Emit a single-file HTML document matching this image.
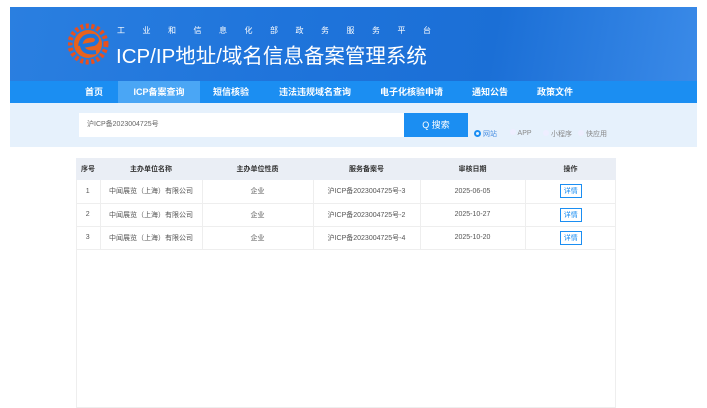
<!DOCTYPE html>
<html><head><meta charset="utf-8"><style>
*{margin:0;padding:0;box-sizing:border-box}
body{width:707px;height:400px;background:#fff;font-family:"Liberation Sans","Noto Sans CJK SC",sans-serif;position:relative;overflow:hidden}
.hdr{position:absolute;left:10px;top:7px;width:687px;height:74px;background:linear-gradient(100deg,#2a7fe0 0%,#1f74db 40%,#1b6fd6 70%,#3a8ae8 100%)}
.sub{position:absolute;left:117px;top:25px;color:#fff;font-size:8px;letter-spacing:17.5px;white-space:nowrap}
.title{position:absolute;left:116px;top:39px;color:#fff;font-size:20.5px;white-space:nowrap}
.nav{position:absolute;left:10px;top:81px;width:687px;height:22px;background:#1b8ef2}
.nav span{position:absolute;top:0;height:22px;line-height:22px;color:#fff;font-size:9px;font-weight:bold;white-space:nowrap}
.srch{position:absolute;left:10px;top:103px;width:687px;height:44px;background:#e6f1fc}
.inp{position:absolute;left:79px;top:113px;width:326px;height:24px;background:#fff;font-size:7px;color:#666;line-height:24px;padding-left:8px}
.btn{position:absolute;left:404px;top:113px;width:64px;height:24px;background:#1b8ef2;color:#fff;font-size:9px;line-height:24px;text-align:center}
.rad{position:absolute;top:129px;font-size:7px;color:#888;white-space:nowrap}
table{position:absolute;left:76px;top:158px;width:540px;border-collapse:collapse;font-size:7px;color:#555}
th{background:#eaeef5;height:22px;font-weight:bold;color:#333}
td{height:23px;border-right:1px solid #eee;border-bottom:1px solid #eee;text-align:center}
td:last-child{border-right:none}
.det{display:inline-block;border:1px solid #1b8ef2;color:#1b8ef2;padding:1px 3px;font-size:7px}
.frame{position:absolute;left:76px;top:158px;width:540px;height:250px;border:1px solid #eee}
</style></head><body>
<div class="hdr">
<svg style="position:absolute;left:58px;top:15px" width="44" height="44" viewBox="0 0 44 44">
<circle cx="20" cy="22" r="18" fill="none" stroke="#e8501e" stroke-width="5" stroke-dasharray="3 2.5"/>
<circle cx="20" cy="22" r="14" fill="#e8621e"/>
<path d="M12 24 Q14 12 26 14 Q32 18 26 22 L14 24 Q16 32 28 30" fill="none" stroke="#1f74db" stroke-width="4"/>
</svg>
</div>
<div class="sub">工业和信息化部政务服务平台</div>
<div class="title">ICP/IP地址/域名信息备案管理系统</div>
<div class="nav">
<span style="left:75px">首页</span>
<span style="left:108px;width:82px;background:#4aa6f5;text-align:center">ICP备案查询</span>
<span style="left:203px">短信核验</span>
<span style="left:269px">违法违规域名查询</span>
<span style="left:370px">电子化核验申请</span>
<span style="left:462px">通知公告</span>
<span style="left:527px">政策文件</span>
</div>
<div class="srch"></div>
<div class="inp">沪ICP备2023004725号</div>
<div class="btn">Q 搜索</div>
<div class="rad" style="left:474px;color:#4a90e2"><span style="display:inline-block;width:7px;height:7px;border:2px solid #1b8ef2;border-radius:50%;vertical-align:-1px"></span> 网站</div>
<div class="rad" style="left:510px"><span style="display:inline-block;width:6px;height:6px;background:#eef;border-radius:50%"></span> APP</div>
<div class="rad" style="left:543px"><span style="display:inline-block;width:6px;height:6px;background:#eef;border-radius:50%"></span> 小程序</div>
<div class="rad" style="left:578px"><span style="display:inline-block;width:6px;height:6px;background:#eef;border-radius:50%"></span> 快应用</div>
<div class="frame"></div>
<table>
<tr><th style="width:24px">序号</th><th style="width:102px">主办单位名称</th><th style="width:111px">主办单位性质</th><th style="width:107px">服务备案号</th><th style="width:105px">审核日期</th><th>操作</th></tr>
<tr><td>1</td><td>中闻展览（上海）有限公司</td><td>企业</td><td>沪ICP备2023004725号-3</td><td>2025-06-05</td><td><span class="det">详情</span></td></tr>
<tr><td>2</td><td>中闻展览（上海）有限公司</td><td>企业</td><td>沪ICP备2023004725号-2</td><td>2025-10-27</td><td><span class="det">详情</span></td></tr>
<tr><td>3</td><td>中闻展览（上海）有限公司</td><td>企业</td><td>沪ICP备2023004725号-4</td><td>2025-10-20</td><td><span class="det">详情</span></td></tr>
</table>
</body></html>
